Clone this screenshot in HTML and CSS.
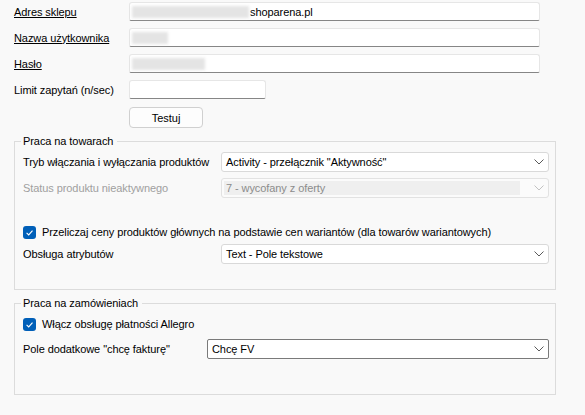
FILE: index.html
```html
<!DOCTYPE html>
<html lang="pl">
<head>
    <meta charset="UTF-8">
    <title>Ustawienia sklepu</title>
    <link rel="stylesheet" href="styles.css">
</head>
<body>
    <form class="settings">
        <div class="account">
            <label class="link">Adres sklepu</label>
            <div class="field"><span class="hidden-value host"></span>shoparena.pl</div>

            <label class="link">Nazwa użytkownika</label>
            <div class="field"><span class="hidden-value user"></span></div>

            <label class="link">Hasło</label>
            <div class="field"><span class="hidden-value pass"></span></div>

            <label>Limit zapytań (n/sec)</label>
            <div class="field short"></div>

            <span></span>
            <button type="button" class="btn">Testuj</button>
        </div>

        <fieldset class="group products">
            <legend>Praca na towarach</legend>

            <div class="row">
                <label>Tryb włączania i wyłączania produktów</label>
                <div class="combo">
                    <span class="value">Activity - przełącznik "Aktywność"</span>
                    <svg class="chevron" width="10" height="6" viewBox="0 0 10 6"><polyline points="0.5,0.5 5,5 9.5,0.5"/></svg>
                </div>
            </div>

            <div class="row">
                <label class="disabled">Status produktu nieaktywnego</label>
                <div class="combo is-disabled">
                    <span class="value">7 - wycofany z oferty</span>
                    <svg class="chevron" width="10" height="6" viewBox="0 0 10 6"><polyline points="0.5,0.5 5,5 9.5,0.5"/></svg>
                </div>
            </div>

            <div class="check gap-top">
                <svg class="box" width="13" height="13" viewBox="0 0 13 13"><rect width="13" height="13" rx="3"/><polyline points="3.6,6.9 5.7,8.9 9.5,4.6"/></svg>
                <span>Przeliczaj ceny produktów głównych na podstawie cen wariantów (dla towarów wariantowych)</span>
            </div>

            <div class="row tight">
                <label>Obsługa atrybutów</label>
                <div class="combo">
                    <span class="value">Text - Pole tekstowe</span>
                    <svg class="chevron" width="10" height="6" viewBox="0 0 10 6"><polyline points="0.5,0.5 5,5 9.5,0.5"/></svg>
                </div>
            </div>
        </fieldset>

        <fieldset class="group orders">
            <legend>Praca na zamówieniach</legend>

            <div class="check">
                <svg class="box" width="13" height="13" viewBox="0 0 13 13"><rect width="13" height="13" rx="3"/><polyline points="3.6,6.9 5.7,8.9 9.5,4.6"/></svg>
                <span>Włącz obsługę płatności Allegro</span>
            </div>

            <div class="row invoice">
                <label>Pole dodatkowe "chcę fakturę"</label>
                <div class="combo focused">
                    <span class="value">Chcę FV</span>
                    <svg class="chevron" width="10" height="6" viewBox="0 0 10 6"><polyline points="0.5,0.5 5,5 9.5,0.5"/></svg>
                </div>
            </div>
        </fieldset>
    </form>
</body>
</html>
```
FILE: styles.css
```css
body {
    margin: 0;
    padding: 2px 0 0 14px;
    background-color: #f9f9f9;
    color: #000;
    font-family: "Liberation Sans", Arial, sans-serif;
    font-size: 11px;
    letter-spacing: -0.08px;
}

.settings {
    width: 542px;
}

/* login block */
.account {
    display: grid;
    grid-template-columns: 115px 411px;
    grid-template-rows: 19px 19px 19px 19px 22px;
    row-gap: 7px;
    align-items: center;
}

.link {
    text-decoration: underline;
}

.field {
    box-sizing: border-box;
    height: 19px;
    display: flex;
    align-items: center;
    padding-left: 2px;
    background-color: #fff;
    border: 1px solid #e6e6e6;
    border-bottom-color: #868686;
    border-radius: 3px 3px 2px 2px;
}

.field.short {
    width: 137px;
}

.hidden-value {
    display: block;
    height: 12px;
    margin-right: 1px;
    background-color: #e4e4e4;
    filter: blur(1.5px);
}

.hidden-value.host { width: 117px; }
.hidden-value.user { width: 36px; }
.hidden-value.pass { width: 73px; }

.btn {
    align-self: end;
    width: 74px;
    height: 21px;
    padding: 0;
    background-color: #fdfdfd;
    border: 1px solid #d0d0d0;
    border-radius: 4px;
    font: inherit;
    color: #000;
}

/* group boxes */
.group {
    box-sizing: border-box;
    width: 542px;
    min-width: 0;
    margin: 6px 0 0;
    border: 1px solid #dcdcdc;
    padding: 4px 6px 25px 8px;
}

.group legend {
    height: 14px;
    line-height: 14px;
    padding: 0 4px 0 2px;
    margin-left: -2px;
}

.row {
    display: grid;
    grid-template-columns: 198px 1fr;
    align-items: center;
    height: 20px;
    margin-bottom: 6px;
}

.row.tight {
    margin-bottom: 0;
}

.disabled {
    color: #a0a0a0;
}

.combo {
    box-sizing: border-box;
    height: 20px;
    display: flex;
    align-items: center;
    justify-content: space-between;
    padding: 0 4px 0 4px;
    background-color: #fff;
    border: 1px solid #d9d9d9;
    border-radius: 3px;
}

.combo .chevron {
    flex: none;
    fill: none;
    stroke: #5a5a5a;
    stroke-width: 1;
}

.combo.is-disabled {
    padding: 2px 4px 2px 2px;
    background-color: #fbfbfb;
    border-color: #e2e2e2;
}

.combo.is-disabled .value {
    flex: 1;
    align-self: stretch;
    display: flex;
    align-items: center;
    padding-left: 2px;
    margin-right: 14px;
    background-color: #efefef;
    color: #8c8c8c;
}

.combo.is-disabled .chevron {
    stroke: #c2c2c2;
}

.combo.focused {
    border-color: #7a7a7a;
    border-radius: 2px;
}

.check {
    display: flex;
    align-items: center;
    gap: 6px;
    height: 16px;
    margin-bottom: 4px;
}

/* collapses with the row margin above it */
.check.gap-top {
    margin-top: 26px;
}

.check .box rect {
    fill: #005fb8;
}

.check .box polyline {
    fill: none;
    stroke: #fff;
    stroke-width: 1.1;
}

/* orders group */
.orders {
    padding-top: 6px;
    padding-bottom: 35px;
}

.orders .check {
    margin-bottom: 7px;
}

.row.invoice {
    grid-template-columns: 184px 1fr;
    margin-bottom: 0;
}
```
